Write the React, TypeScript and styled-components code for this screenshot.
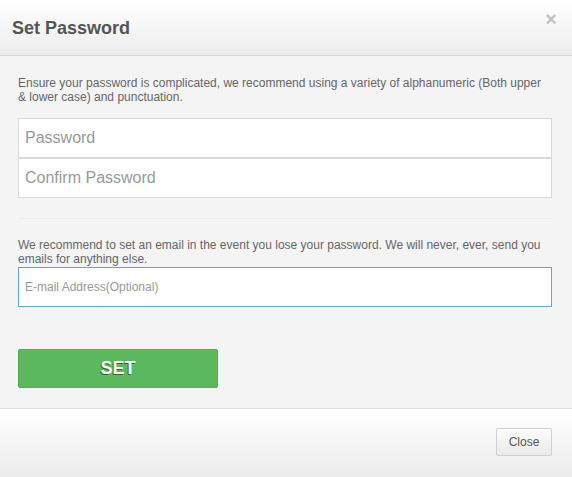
import React, { useState } from 'react';
import styled, { createGlobalStyle } from 'styled-components';

const GlobalStyle = createGlobalStyle`
  html, body {
    margin: 0;
    padding: 0;
    background: #f4f4f4;
    font-family: 'Liberation Sans', Arial, sans-serif;
  }
`;

// Modal shell
const Modal = styled.div`
  width: 572px;
  height: 477px;
  display: flex;
  flex-direction: column;
  background: #f4f4f4;
  overflow: hidden;
`;

const Header = styled.div`
  height: 56px;
  flex-shrink: 0;
  display: flex;
  align-items: center;
  justify-content: space-between;
  padding: 0 15px 0 12px;
  box-sizing: border-box;
  background: linear-gradient(to bottom, #ffffff 0%, #ececec 100%);
  border-bottom: 1px solid #d6d6d6;
`;

const Title = styled.h3`
  margin: 0;
  font-size: 18px;
  font-weight: bold;
  color: #555;
  line-height: 20px;
`;

const CloseX = styled.button`
  align-self: flex-start;
  margin-top: 9px;
  padding: 0;
  border: none;
  background: transparent;
  font-family: 'Liberation Sans', Arial, sans-serif;
  font-size: 20px;
  font-weight: bold;
  line-height: 20px;
  color: #000;
  opacity: 0.22;
  text-shadow: 0 1px 0 #fff;
  cursor: pointer;
`;

const Body = styled.div`
  flex: 1;
  padding: 20px 20px 20px 18px;
  display: flex;
  flex-direction: column;
`;

const Note = styled.p`
  margin: 0;
  font-size: 12px;
  line-height: 14px;
  color: #666;
`;

const FieldStack = styled.div<{ $gap: number }>`
  display: flex;
  flex-direction: column;
  margin-top: ${p => p.$gap}px;
`;

const Field = styled.input<{ $small?: boolean; $active?: boolean }>`
  height: 40px;
  box-sizing: border-box;
  width: 100%;
  margin: 0;
  padding: 0 6px;
  border: 1px solid ${p => (p.$active ? '#66a3d0' : '#d9d9d9')};
  background: #fff;
  font-family: 'Liberation Sans', Arial, sans-serif;
  font-size: ${p => (p.$small ? '12px' : '16px')};
  color: #333;
  outline: none;
  caret-color: #555;

  &::placeholder {
    color: #999;
  }
`;

const Divider = styled.hr`
  margin: 20px 0 19px;
  border: none;
  border-top: 1px solid #e8e8e8;
  height: 0;
`;

const SetButton = styled.button`
  margin-top: 42px;
  width: 200px;
  height: 39px;
  border: 1px solid #4cae4c;
  border-radius: 2px;
  background: #5cb85c;
  color: #fff;
  font-family: 'Liberation Sans', Arial, sans-serif;
  font-size: 18px;
  font-weight: bold;
  text-shadow: -1px 1px 0 rgba(0, 0, 0, 0.45);
  cursor: pointer;
`;

const Footer = styled.div`
  height: 69px;
  flex-shrink: 0;
  display: flex;
  justify-content: flex-end;
  align-items: flex-start;
  padding: 19px 20px 0 0;
  box-sizing: border-box;
  background: linear-gradient(to bottom, #ffffff 0%, #ebebeb 100%);
  border-top: 1px solid #dedede;
`;

const FooterButton = styled.button`
  width: 56px;
  height: 28px;
  border: 1px solid #cfcfcf;
  border-radius: 2px;
  background: linear-gradient(to bottom, #fdfdfd 0%, #eaeaea 100%);
  color: #555;
  font-family: 'Liberation Sans', Arial, sans-serif;
  font-size: 12px;
  cursor: pointer;
`;

const App: React.FC = () => {
  const [password, setPassword] = useState('');
  const [confirm, setConfirm] = useState('');
  const [email, setEmail] = useState('');

  return (
    <>
      <GlobalStyle />
      <Modal>
        <Header>
          <Title>Set Password</Title>
          <CloseX aria-label="Close">×</CloseX>
        </Header>

        <Body>
          <Note>
            Ensure your password is complicated, we recommend using a variety of alphanumeric (Both upper
            & lower case) and punctuation.
          </Note>
          <FieldStack $gap={14}>
            <Field
              type="password"
              placeholder="Password"
              value={password}
              onChange={e => setPassword(e.target.value)}
            />
            <Field
              type="password"
              placeholder="Confirm Password"
              value={confirm}
              onChange={e => setConfirm(e.target.value)}
            />
          </FieldStack>

          <Divider />

          <Note>
            We recommend to set an email in the event you lose your password. We will never, ever, send you
            emails for anything else.
          </Note>
          <FieldStack $gap={1}>
            <Field
              $small
              $active
              type="email"
              placeholder="E-mail Address(Optional)"
              value={email}
              onChange={e => setEmail(e.target.value)}
              autoFocus
            />
          </FieldStack>

          <div>
            <SetButton>SET</SetButton>
          </div>
        </Body>

        <Footer>
          <FooterButton>Close</FooterButton>
        </Footer>
      </Modal>
    </>
  );
};

export default App;
